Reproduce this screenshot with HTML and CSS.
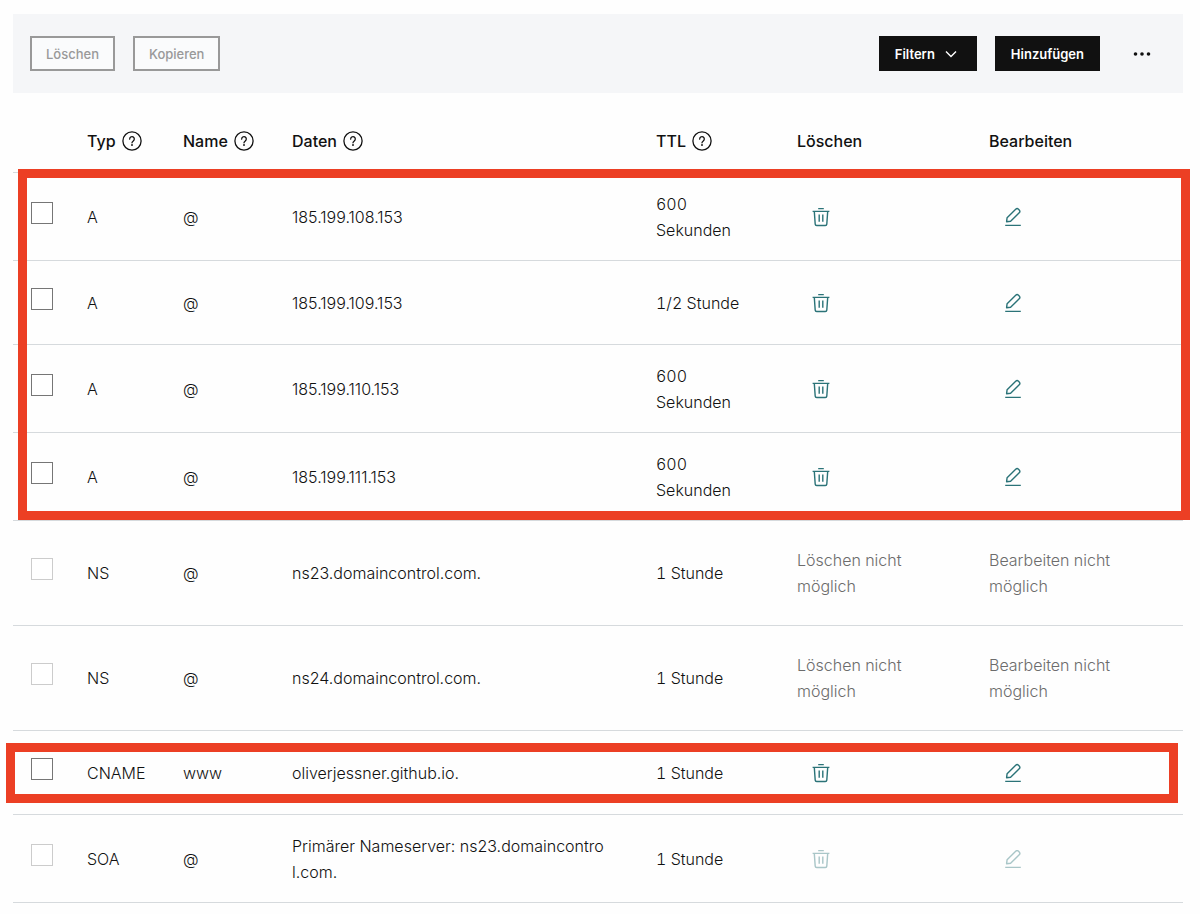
FILE: index.html
```html
<!DOCTYPE html>
<html lang="de">
<head>
<meta charset="utf-8">
<meta name="viewport" content="width=device-width, initial-scale=1">
<title>DNS-Einträge</title>
<link rel="stylesheet" href="styles.css">
</head>
<body>
<svg class="sprite" aria-hidden="true">
  <symbol id="help" viewBox="0 0 20 20">
    <circle cx="10" cy="10" r="9.1" fill="none" stroke="currentColor" stroke-width="1.3"/>
    <path d="M7.7 8.1a2.3 2.3 0 1 1 3.6 1.8c-.8.6-1.3 1-1.3 1.9" fill="none" stroke="currentColor" stroke-width="1.3" stroke-linecap="round"/>
    <circle cx="10" cy="14" r="0.95" fill="currentColor"/>
  </symbol>
  <symbol id="trash" viewBox="0 0 24 24">
    <path d="M9.2 3.6h5.6M3.6 6.4h16.8M5.3 6.4l.9 12.7a1.5 1.5 0 0 0 1.5 1.4h8.6a1.5 1.5 0 0 0 1.5-1.4l.9-12.7M10.2 9.6v7.2M13.8 9.6v7.2" fill="none" stroke="currentColor" stroke-width="1.4"/>
  </symbol>
  <symbol id="edit" viewBox="0 0 24 24">
    <path d="M4.2 20.4h15.6M5.6 16.7l.5-4 8.6-8.4a2 2 0 0 1 2.8 0l.7.7a2 2 0 0 1 0 2.8l-8.6 8.4z" fill="none" stroke="currentColor" stroke-width="1.4" stroke-linejoin="round"/>
  </symbol>
</svg>
<main class="page">
  <div class="toolbar">
    <button class="btn btn-outline" type="button" disabled>Löschen</button>
    <button class="btn btn-outline" type="button" disabled>Kopieren</button>
    <div class="toolbar-end">
      <button class="btn btn-dark" type="button">Filtern
        <svg class="chevron" viewBox="0 0 12 12" aria-hidden="true"><path d="M1 3.5l5 5 5-5" fill="none" stroke="currentColor" stroke-width="1.4"/></svg>
      </button>
      <button class="btn btn-dark" type="button">Hinzufügen</button>
      <button class="more" type="button" aria-label="Weitere Aktionen">
        <svg class="dots" viewBox="0 0 18 4" aria-hidden="true"><circle cx="2.5" cy="2" r="1.8"/><circle cx="9" cy="2" r="1.8"/><circle cx="15.5" cy="2" r="1.8"/></svg>
      </button>
    </div>
  </div>

  <table class="records">
    <colgroup>
      <col class="c-check"><col class="c-type"><col class="c-name"><col><col class="c-ttl"><col class="c-delete"><col class="c-edit">
    </colgroup>
    <thead>
      <tr>
        <td></td>
        <th scope="col"><span class="head">Typ <svg class="help"><use href="#help"/></svg></span></th>
        <th scope="col"><span class="head">Name <svg class="help"><use href="#help"/></svg></span></th>
        <th scope="col"><span class="head">Daten <svg class="help"><use href="#help"/></svg></span></th>
        <th scope="col"><span class="head">TTL <svg class="help"><use href="#help"/></svg></span></th>
        <th scope="col">Löschen</th>
        <th scope="col">Bearbeiten</th>
      </tr>
    </thead>
    <tbody class="marked">
      <tr>
        <td><input class="check" type="checkbox" aria-label="A 185.199.108.153 auswählen"></td>
        <td>A</td><td>@</td><td class="data">185.199.108.153</td><td>600 Sekunden</td>
        <td><button class="action" type="button" aria-label="Löschen"><svg class="icon"><use href="#trash"/></svg></button></td>
        <td><button class="action" type="button" aria-label="Bearbeiten"><svg class="icon"><use href="#edit"/></svg></button></td>
      </tr>
      <tr class="short">
        <td><input class="check" type="checkbox" aria-label="A 185.199.109.153 auswählen"></td>
        <td>A</td><td>@</td><td class="data">185.199.109.153</td><td>1/2 Stunde</td>
        <td><button class="action" type="button" aria-label="Löschen"><svg class="icon"><use href="#trash"/></svg></button></td>
        <td><button class="action" type="button" aria-label="Bearbeiten"><svg class="icon"><use href="#edit"/></svg></button></td>
      </tr>
      <tr>
        <td><input class="check" type="checkbox" aria-label="A 185.199.110.153 auswählen"></td>
        <td>A</td><td>@</td><td class="data">185.199.110.153</td><td>600 Sekunden</td>
        <td><button class="action" type="button" aria-label="Löschen"><svg class="icon"><use href="#trash"/></svg></button></td>
        <td><button class="action" type="button" aria-label="Bearbeiten"><svg class="icon"><use href="#edit"/></svg></button></td>
      </tr>
      <tr>
        <td><input class="check" type="checkbox" aria-label="A 185.199.111.153 auswählen"></td>
        <td>A</td><td>@</td><td class="data">185.199.111.153</td><td>600 Sekunden</td>
        <td><button class="action" type="button" aria-label="Löschen"><svg class="icon"><use href="#trash"/></svg></button></td>
        <td><button class="action" type="button" aria-label="Bearbeiten"><svg class="icon"><use href="#edit"/></svg></button></td>
      </tr>
    </tbody>
    <tbody>
      <tr class="tall">
        <td><input class="check" type="checkbox" disabled aria-label="NS ns23.domaincontrol.com. auswählen"></td>
        <td>NS</td><td>@</td><td class="data">ns23.domaincontrol.com.</td><td>1 Stunde</td>
        <td class="locked">Löschen nicht möglich</td>
        <td class="locked">Bearbeiten nicht möglich</td>
      </tr>
      <tr class="tall">
        <td><input class="check" type="checkbox" disabled aria-label="NS ns24.domaincontrol.com. auswählen"></td>
        <td>NS</td><td>@</td><td class="data">ns24.domaincontrol.com.</td><td>1 Stunde</td>
        <td class="locked">Löschen nicht möglich</td>
        <td class="locked">Bearbeiten nicht möglich</td>
      </tr>
    </tbody>
    <tbody class="marked marked-single">
      <tr class="short">
        <td><input class="check" type="checkbox" aria-label="CNAME www auswählen"></td>
        <td>CNAME</td><td>www</td><td class="data">oliverjessner.github.io.</td><td>1 Stunde</td>
        <td><button class="action" type="button" aria-label="Löschen"><svg class="icon"><use href="#trash"/></svg></button></td>
        <td><button class="action" type="button" aria-label="Bearbeiten"><svg class="icon"><use href="#edit"/></svg></button></td>
      </tr>
    </tbody>
    <tbody>
      <tr>
        <td><input class="check" type="checkbox" disabled aria-label="SOA auswählen"></td>
        <td>SOA</td><td>@</td><td class="data">Primärer Nameserver: ns23.domaincontrol.com.</td><td>1 Stunde</td>
        <td><button class="action" type="button" disabled aria-label="Löschen"><svg class="icon"><use href="#trash"/></svg></button></td>
        <td><button class="action" type="button" disabled aria-label="Bearbeiten"><svg class="icon"><use href="#edit"/></svg></button></td>
      </tr>
    </tbody>
  </table>
</main>
</body>
</html>
```

FILE: styles.css
```css
* { box-sizing: border-box; }

body {
  margin: 0;
  background: #fefefe;
  color: #111;
  font-family: Inter, "Liberation Sans", sans-serif;
  font-size: 16px;
  line-height: 26px;
}

button { font-family: inherit; }

.sprite {
  position: absolute;
  width: 0;
  height: 0;
}

.page { padding: 14px 17px 0 13px; }

.toolbar {
  display: flex;
  align-items: center;
  gap: 18px;
  padding: 22px 17px;
  background: #f5f6f8;
}

.toolbar-end {
  display: flex;
  align-items: center;
  gap: 18px;
  margin-left: auto;
}

.btn {
  display: flex;
  align-items: center;
  gap: 10px;
  height: 35px;
  padding: 0 14px;
  border: 2px solid #111;
  font-size: 13px;
  font-weight: 500;
}

.btn-outline {
  border-color: #999;
  background: #fafbfc;
  color: #999;
}

.btn-dark {
  background: #111;
  color: #fff;
  font-weight: 600;
}

.chevron {
  width: 12px;
  height: 12px;
  margin-right: 4px;
}

.more {
  display: grid;
  place-items: center;
  width: 48px;
  height: 35px;
  padding: 0;
  border: 0;
  background: none;
  color: #111;
}

.dots {
  width: 18px;
  height: 4px;
  fill: currentColor;
}

.records {
  width: 100%;
  table-layout: fixed;
  border-spacing: 0;
  font-weight: 350;
  font-variant-numeric: tabular-nums;
}

.c-check { width: 56px; }
.c-type { width: 96px; }
.c-name { width: 109px; }
.c-ttl { width: 141px; }
.c-delete { width: 192px; }
.c-edit { width: 212px; }

th,
td {
  padding: 0 18px;
  border-bottom: 1px solid #d6dadd;
  text-align: left;
  vertical-align: middle;
}

thead th {
  padding-top: 35px;
  padding-bottom: 18px;
  font-weight: 500;
}

.head {
  display: flex;
  align-items: center;
  gap: 6px;
}

.help {
  flex: none;
  width: 20px;
  height: 20px;
}

tbody tr { height: 88px; }
tbody .short { height: 84px; }
tbody .tall { height: 105px; }

.data {
  padding-right: 30px;
  font-variant-numeric: normal;
  word-break: break-all;
}

.locked { color: #6c6c6c; }

.check {
  display: block;
  appearance: none;
  width: 22px;
  height: 22px;
  margin: 0 0 8px;
  border: 1px solid #767676;
  background: #fff;
}

.check:disabled { border-color: #ccc; }

.action {
  display: block;
  height: 24px;
  padding: 0 12px;
  border: 0;
  background: none;
  color: #2b7378;
}

.action:disabled { opacity: 0.4; }

.icon {
  display: block;
  width: 24px;
  height: 24px;
}

/* Red frames drawn over highlighted record groups */
.marked { position: relative; }

.marked::after {
  content: "";
  position: absolute;
  inset: -4px -7px 1px 5px;
  border: 9px solid #ec3f24;
  pointer-events: none;
}

.marked-single::after { inset: 12px 5px 12px -7px; }
```
